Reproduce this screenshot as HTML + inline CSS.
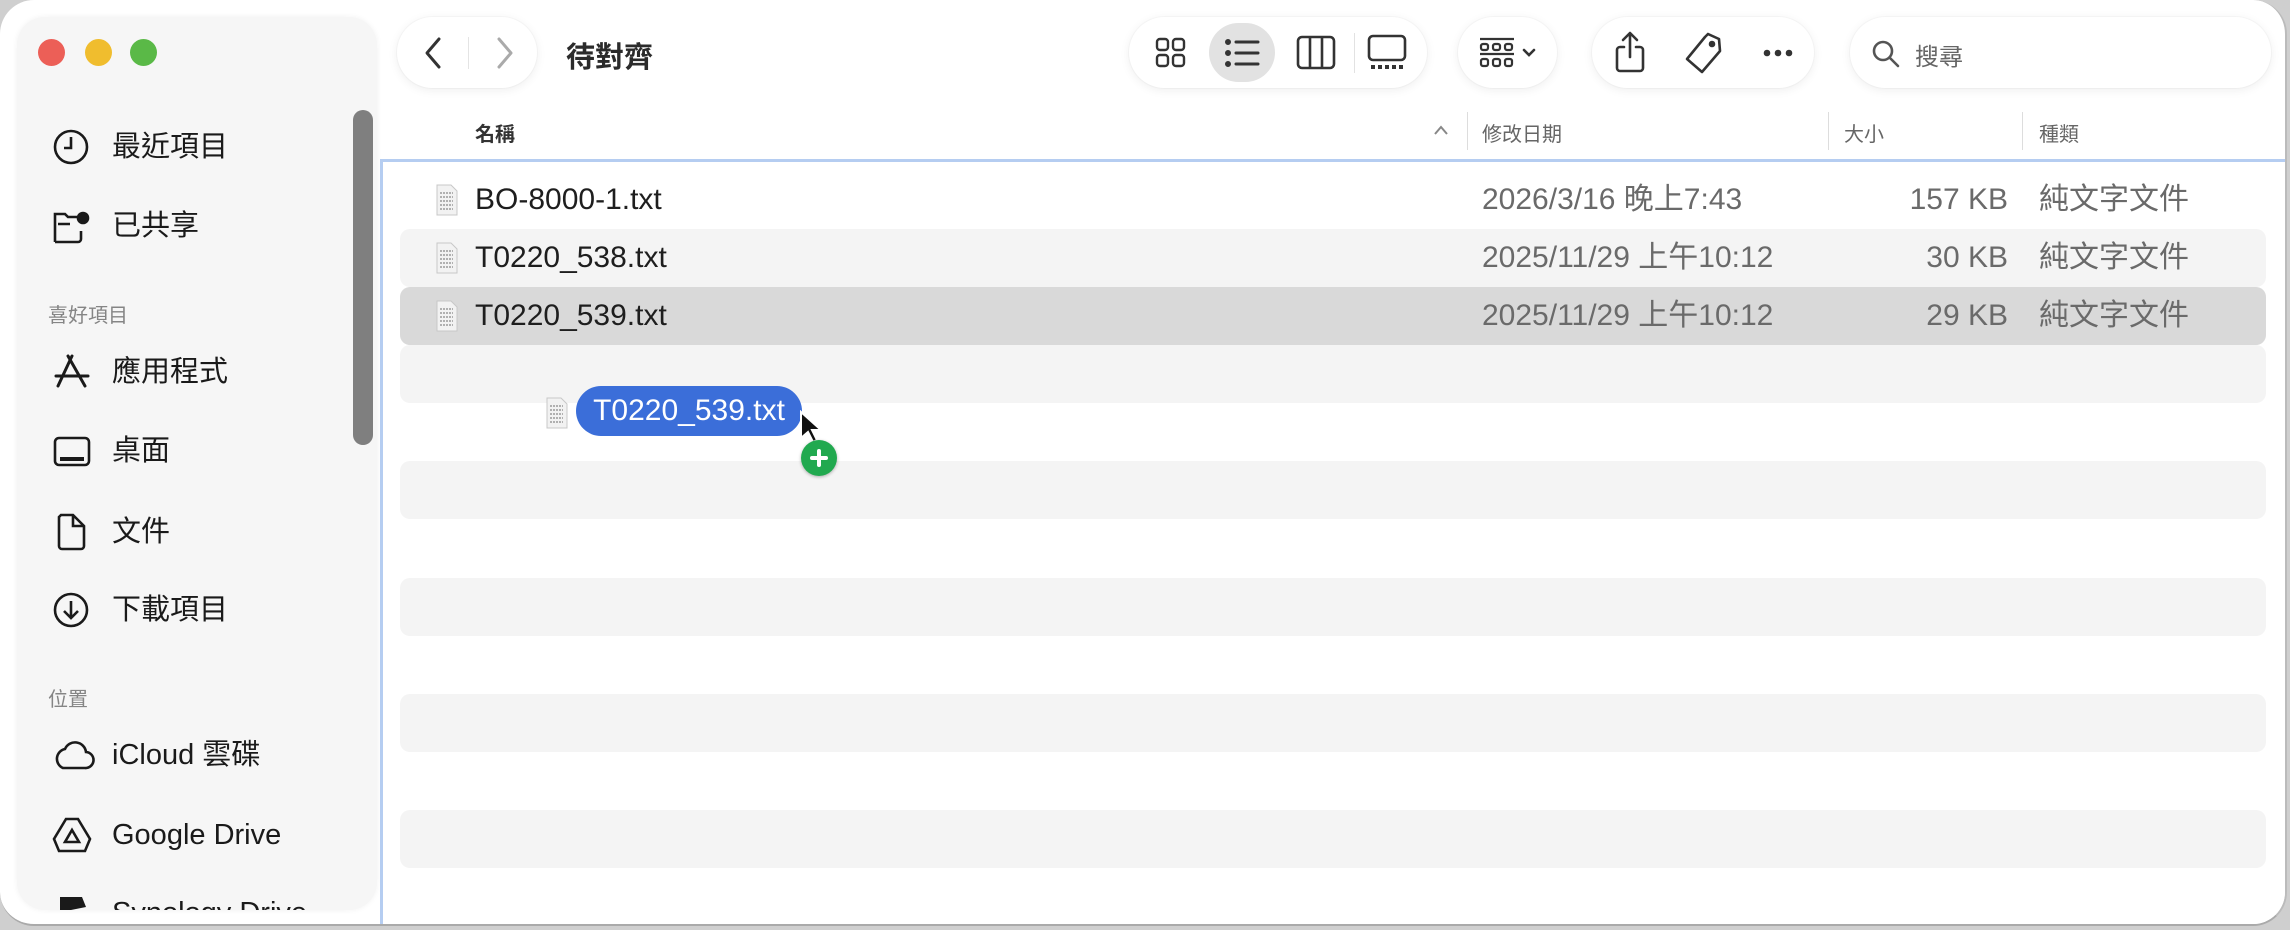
<!DOCTYPE html>
<html><head><meta charset="utf-8"><style>
*{margin:0;padding:0;box-sizing:border-box}
body{width:2290px;height:930px;background:#cfcfcf;position:relative;overflow:hidden;font-family:"Liberation Sans","Noto Sans CJK TC",sans-serif}
.win{position:absolute;left:0;top:0;width:2287px;height:926px;background:#fff;border-radius:34px;overflow:hidden;border-right:2px solid #bbb;border-bottom:2px solid #aaa}
.side{position:absolute;left:17px;top:17px;width:360px;height:893px;background:#f6f6f6;border-radius:28px;overflow:hidden;box-shadow:0 0 6px rgba(0,0,0,.06)}
.tl{position:absolute;top:39px;width:27px;height:27px;border-radius:50%}
.si{position:absolute;left:0;font-size:29px;color:#1a1a1a;height:40px;line-height:40px;white-space:nowrap}
.si svg{position:absolute;left:35px;top:0}
.si span{position:absolute;left:95px}
.sh{position:absolute;left:31px;font-size:20px;color:#858585}
.pill{position:absolute;top:17px;height:71px;background:#fff;border-radius:36px;box-shadow:0 2px 10px rgba(0,0,0,.07),0 0 0 1px rgba(0,0,0,.025)}
.pill svg{position:absolute}
.hdr{position:absolute;top:118px;font-size:20px;color:#666}
.vd{position:absolute;top:112px;width:1px;height:38px;background:#ddd}
.list{position:absolute;left:380px;top:159px;width:1907px;height:768px;border:3px solid #b5cdf1;border-right:none;background:#fff}
.stripe{position:absolute;left:400px;width:1866px;height:58px;background:#f4f4f4;border-radius:10px}
.row{position:absolute;left:400px;width:1866px;height:58px;font-size:30px;line-height:58px;color:#1e1e1e}
.row .n{position:absolute;left:75px}
.row .d{position:absolute;left:1082px;color:#6a6a6a}
.row .s{position:absolute;right:258px;color:#6a6a6a}
.row .k{position:absolute;left:1639px;color:#6a6a6a}
.row svg{position:absolute;left:36px;top:13px}
</style></head><body>
<div class="win">
<div class="side">
  <div class="tl" style="left:21px;top:22px;background:#ec5f57"></div>
  <div class="tl" style="left:68px;top:22px;background:#f0bd2e"></div>
  <div class="tl" style="left:113px;top:22px;background:#5ab947"></div>
  <div style="position:absolute;left:336px;top:93px;width:20px;height:335px;background:#7f7f7f;border-radius:10px"></div>
  <div class="si" style="top:110px"><svg width="40" height="40" viewBox="0 0 40 40" fill="none" stroke="#1a1a1a" stroke-width="2.6"><circle cx="19" cy="20" r="16"/><path d="M19 10v11h-7"/></svg><span>最近項目</span></div>
  <div class="si" style="top:189px"><svg width="40" height="40" viewBox="0 0 40 40" fill="none" stroke="#1a1a1a" stroke-width="2.6"><path d="M3 36V8h10l3 3h12M3 36h23a3 3 0 0 0 3-3v-8M6 18h12"/><circle cx="31" cy="12" r="5" fill="#1a1a1a"/></svg><span>已共享</span></div>
  <div class="sh" style="top:282px">喜好項目</div>
  <div class="si" style="top:335px"><svg width="40" height="40" viewBox="0 0 40 40" fill="none" stroke="#1a1a1a" stroke-width="3" stroke-linecap="round"><path d="M20 4l-14 30M16 4l17 30M4 24h32"/></svg><span>應用程式</span></div>
  <div class="si" style="top:414px"><svg width="40" height="40" viewBox="0 0 40 40" fill="none" stroke="#1a1a1a" stroke-width="2.6"><rect x="3" y="7" width="34" height="27" rx="4"/><path d="M8 28h24" stroke-width="4"/></svg><span>桌面</span></div>
  <div class="si" style="top:495px"><svg width="40" height="40" viewBox="0 0 40 40" fill="none" stroke="#1a1a1a" stroke-width="2.6"><path d="M9 3h12l11 11v20a3 3 0 0 1-3 3H10a3 3 0 0 1-3-3V5zM21 3v11h11"/></svg><span>文件</span></div>
  <div class="si" style="top:573px"><svg width="40" height="40" viewBox="0 0 40 40" fill="none" stroke="#1a1a1a" stroke-width="2.6"><circle cx="19" cy="20" r="16"/><path d="M19 11v17M12 21l7 7 7-7"/></svg><span>下載項目</span></div>
  <div class="sh" style="top:666px">位置</div>
  <div class="si" style="top:718px"><svg width="44" height="40" viewBox="0 0 44 40" fill="none" stroke="#1a1a1a" stroke-width="2.6"><path d="M11 33h22a8 8 0 0 0 1-16 11 11 0 0 0-21-3A10 10 0 0 0 11 33z"/></svg><span>iCloud 雲碟</span></div>
  <div class="si" style="top:798px"><svg width="40" height="40" viewBox="0 0 40 40" fill="none" stroke="#1a1a1a" stroke-width="2.6"><path d="M14 4h12l12 20-5 12H7L2 24z"/><path d="M20 15l7 12H13z"/></svg><span>Google Drive</span></div>
  <div class="si" style="top:876px"><svg width="40" height="40" viewBox="0 0 40 40"><path d="M8 4h22l4 10-20 4-6 20z" fill="#1a1a1a"/></svg><span>Synology Drive</span></div>
</div>

<div class="pill" style="left:397px;width:140px">
  <svg style="left:22px;top:18px" width="30" height="36" viewBox="0 0 30 36" fill="none" stroke="#333" stroke-width="3" stroke-linecap="round" stroke-linejoin="round"><path d="M20 4L8 18l12 14"/></svg>
  <div style="position:absolute;left:71px;top:20px;width:1px;height:32px;background:#e4e4e4"></div>
  <svg style="left:92px;top:18px" width="30" height="36" viewBox="0 0 30 36" fill="none" stroke="#aaa" stroke-width="3" stroke-linecap="round" stroke-linejoin="round"><path d="M10 4l12 14-12 14"/></svg>
</div>
<div style="position:absolute;left:566px;top:34px;font-size:29px;font-weight:bold;color:#2b2b2b">待對齊</div>

<div class="pill" style="left:1129px;width:298px">
  <div style="position:absolute;left:80px;top:6px;width:66px;height:59px;border-radius:30px;background:#e2e2e2"></div>
  <svg style="left:25px;top:19px" width="34" height="34" viewBox="0 0 34 34" fill="none" stroke="#333" stroke-width="2.4"><rect x="3" y="3" width="11" height="11" rx="3"/><rect x="19" y="3" width="11" height="11" rx="3"/><rect x="3" y="19" width="11" height="11" rx="3"/><rect x="19" y="19" width="11" height="11" rx="3"/></svg>
  <svg style="left:95px;top:19px" width="38" height="34" viewBox="0 0 38 34" fill="none" stroke="#333" stroke-width="3" stroke-linecap="round"><path d="M12 6h22M12 17h22M12 28h22"/><circle cx="4" cy="6" r="1.5" fill="#333"/><circle cx="4" cy="17" r="1.5" fill="#333"/><circle cx="4" cy="28" r="1.5" fill="#333"/></svg>
  <svg style="left:167px;top:17px" width="40" height="38" viewBox="0 0 40 38" fill="none" stroke="#333" stroke-width="2.6"><rect x="2" y="3" width="36" height="31" rx="4"/><path d="M14 3v31M26 3v31"/></svg>
  <div style="position:absolute;left:225px;top:16px;width:1px;height:40px;background:#e2e2e2"></div>
  <svg style="left:238px;top:17px" width="40" height="38" viewBox="0 0 40 38" fill="none" stroke="#333" stroke-width="2.6"><rect x="2" y="2" width="36" height="24" rx="4"/><path d="M4 33h32" stroke-width="4" stroke-dasharray="4 3"/></svg>
</div>

<div class="pill" style="left:1458px;width:99px">
  <svg style="left:20px;top:20px" width="62" height="34" viewBox="0 0 62 34" fill="none" stroke="#333" stroke-width="2.2"><path d="M2 2h34M2 17h34"/><rect x="3" y="7" width="7" height="6" rx="2"/><rect x="15" y="7" width="7" height="6" rx="2"/><rect x="27" y="7" width="7" height="6" rx="2"/><rect x="3" y="22" width="7" height="7" rx="2"/><rect x="15" y="22" width="7" height="7" rx="2"/><rect x="27" y="22" width="7" height="7" rx="2"/><path d="M46 13l5 5 5-5" stroke-width="2.6" stroke-linecap="round"/></svg>
</div>

<div class="pill" style="left:1592px;width:222px">
  <svg style="left:20px;top:13px" width="36" height="44" viewBox="0 0 36 44" fill="none" stroke="#333" stroke-width="2.6" stroke-linecap="round" stroke-linejoin="round"><path d="M18 3v24M11 10l7-7 7 7M12 17H8a3 3 0 0 0-3 3v18a3 3 0 0 0 3 3h20a3 3 0 0 0 3-3V20a3 3 0 0 0-3-3h-4"/></svg>
  <svg style="left:90px;top:14px" width="42" height="44" viewBox="0 0 42 44" fill="none" stroke="#333" stroke-width="2.6" stroke-linejoin="round"><path d="M26 3l11 5 1 12-18 21-15-13L23 6z"/><circle cx="30" cy="13" r="2" fill="#333"/></svg>
  <svg style="left:170px;top:31px" width="32" height="10" viewBox="0 0 32 10" fill="#333"><circle cx="5" cy="5" r="3.3"/><circle cx="16" cy="5" r="3.3"/><circle cx="27" cy="5" r="3.3"/></svg>
</div>

<div class="pill" style="left:1850px;width:421px">
  <svg style="left:21px;top:22px" width="30" height="30" viewBox="0 0 30 30" fill="none" stroke="#555" stroke-width="2.6" stroke-linecap="round"><circle cx="12" cy="12" r="9"/><path d="M19 19l8 8"/></svg>
  <div style="position:absolute;left:65px;top:20px;font-size:24px;color:#666">搜尋</div>
</div>

<div class="hdr" style="left:475px;color:#333;font-weight:bold">名稱</div>
<svg style="position:absolute;left:1433px;top:124px" width="16" height="12" viewBox="0 0 16 12" fill="none" stroke="#888" stroke-width="2"><path d="M2 10l6-7 6 7"/></svg>
<div class="vd" style="left:1467px"></div>
<div class="hdr" style="left:1482px">修改日期</div>
<div class="vd" style="left:1828px"></div>
<div class="hdr" style="left:1844px">大小</div>
<div class="vd" style="left:2022px"></div>
<div class="hdr" style="left:2039px">種類</div>

<div class="list"></div>
<div class="stripe" style="top:229px"></div>
<div class="stripe" style="top:287px;background:#d9d9d9"></div>
<div class="stripe" style="top:345px"></div>
<div class="stripe" style="top:461px"></div>
<div class="stripe" style="top:578px"></div>
<div class="stripe" style="top:694px"></div>
<div class="stripe" style="top:810px"></div>

<div class="row" style="top:171px"><svg width="22" height="32" viewBox="0 0 22 32"><path d="M1 1h14l6 6v24H1z" fill="#f2f2f2" stroke="#c8c8c8"/><path d="M4 9h13M4 13h13M4 17h13M4 21h13M4 25h13" stroke="#999" stroke-width="1.5" stroke-dasharray="2 1"/></svg><span class="n">BO-8000-1.txt</span><span class="d">2026/3/16 晚上7:43</span><span class="s">157 KB</span><span class="k">純文字文件</span></div>
<div class="row" style="top:229px"><svg width="22" height="32" viewBox="0 0 22 32"><path d="M1 1h14l6 6v24H1z" fill="#f2f2f2" stroke="#c8c8c8"/><path d="M4 9h13M4 13h13M4 17h13M4 21h13M4 25h13" stroke="#999" stroke-width="1.5" stroke-dasharray="2 1"/></svg><span class="n">T0220_538.txt</span><span class="d">2025/11/29 上午10:12</span><span class="s">30 KB</span><span class="k">純文字文件</span></div>
<div class="row" style="top:287px"><svg width="22" height="32" viewBox="0 0 22 32"><path d="M1 1h14l6 6v24H1z" fill="#f2f2f2" stroke="#c8c8c8"/><path d="M4 9h13M4 13h13M4 17h13M4 21h13M4 25h13" stroke="#999" stroke-width="1.5" stroke-dasharray="2 1"/></svg><span class="n">T0220_539.txt</span><span class="d">2025/11/29 上午10:12</span><span class="s">29 KB</span><span class="k">純文字文件</span></div>

<svg style="position:absolute;left:546px;top:397px" width="22" height="32" viewBox="0 0 22 32"><path d="M1 1h14l6 6v24H1z" fill="#f2f2f2" stroke="#c8c8c8"/><path d="M4 9h13M4 13h13M4 17h13M4 21h13M4 25h13" stroke="#999" stroke-width="1.5" stroke-dasharray="2 1"/></svg>
<div style="position:absolute;left:576px;top:386px;width:226px;height:50px;border-radius:25px;background:#3b6ed9;color:#fff;font-size:30px;line-height:50px;text-align:center">T0220_539.txt</div>
<svg style="position:absolute;left:799px;top:410px" width="26" height="34" viewBox="0 0 26 34"><path d="M2 2v26l7-6 5 10 4-2-5-10h9z" fill="#111" stroke="#fff" stroke-width="2"/></svg>
<div style="position:absolute;left:801px;top:440px;width:36px;height:36px;border-radius:50%;background:#21a94f;box-shadow:0 1px 3px rgba(0,0,0,.3)"></div>
<div style="position:absolute;left:810px;top:456px;width:18px;height:4px;background:#fff;border-radius:2px"></div>
<div style="position:absolute;left:817px;top:449px;width:4px;height:18px;background:#fff;border-radius:2px"></div>
</div>
</body></html>
